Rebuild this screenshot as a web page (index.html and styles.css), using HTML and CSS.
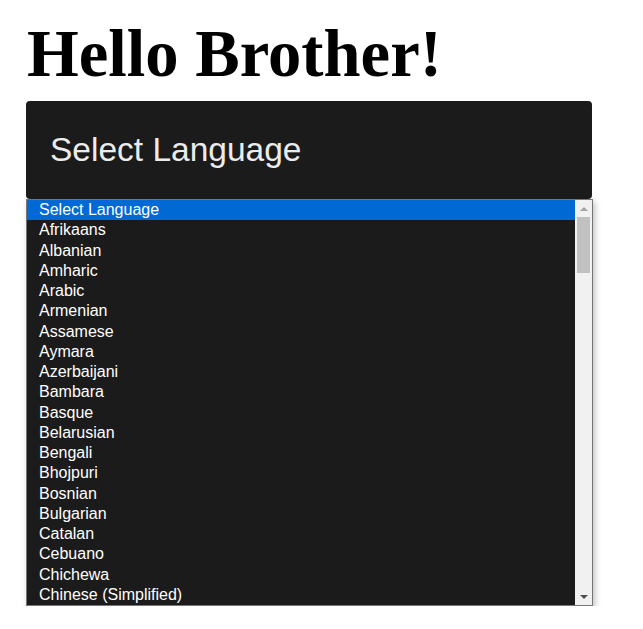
FILE: index.html
```html
<!DOCTYPE html>
<html>
<head>
<meta charset="utf-8">
<link rel="stylesheet" href="styles.css">
</head>
<body>
<div class="page">
  <h1 class="title">Hello Brother!</h1>
  <div class="picker">
    <div class="select">Select Language</div>
    <div class="popup">
      <div class="items">
        <div class="opt selected">Select Language</div>
        <div class="opt">Afrikaans</div>
        <div class="opt">Albanian</div>
        <div class="opt">Amharic</div>
        <div class="opt">Arabic</div>
        <div class="opt">Armenian</div>
        <div class="opt">Assamese</div>
        <div class="opt">Aymara</div>
        <div class="opt">Azerbaijani</div>
        <div class="opt">Bambara</div>
        <div class="opt">Basque</div>
        <div class="opt">Belarusian</div>
        <div class="opt">Bengali</div>
        <div class="opt">Bhojpuri</div>
        <div class="opt">Bosnian</div>
        <div class="opt">Bulgarian</div>
        <div class="opt">Catalan</div>
        <div class="opt">Cebuano</div>
        <div class="opt">Chichewa</div>
        <div class="opt">Chinese (Simplified)</div>
      </div>
      <div class="sbar">
        <div class="arrow up"></div>
        <div class="track"><div class="thumb"></div></div>
        <div class="arrow down"></div>
      </div>
    </div>
  </div>
</div>
</body>
</html>
```

FILE: styles.css
```css
html, body {
  margin: 0;
  padding: 0;
  background: #ffffff;
}
.page {
  padding: 0 51px 0 26px;
}
.title {
  margin: 0;
  padding: 21px 0 0 1px;
  height: 101px;
  box-sizing: border-box;
  font-family: "Liberation Serif", "Times New Roman", serif;
  font-weight: bold;
  font-size: 66.6px;
  line-height: 1;
  color: #000;
}
.select {
  height: 98px;
  background: #1b1b1b;
  border-radius: 4px;
  display: flex;
  align-items: center;
  padding-left: 24px;
  box-sizing: border-box;
  font-family: "Liberation Sans", Arial, sans-serif;
  font-size: 33.5px;
  color: #ececec;
}
.popup {
  margin-top: 0;
  width: 567px;
  height: 407px;
  box-sizing: border-box;
  border: 1px solid #767676;
  background: #1b1b1b;
  display: flex;
  box-shadow: 2px 3px 6px rgba(0,0,0,0.25);
}
.items {
  flex: 1;
  overflow: hidden;
}
.opt {
  height: 20.25px;
  line-height: 19px;
  padding-left: 12px;
  font-family: "Liberation Sans", Arial, sans-serif;
  font-size: 16px;
  color: #ffffff;
  white-space: nowrap;
}
.opt.selected {
  background: #0069d4;
}
.sbar {
  width: 17px;
  background: #f1f1f1;
  display: flex;
  flex-direction: column;
}
.arrow {
  height: 17px;
  display: flex;
  align-items: center;
  justify-content: center;
}
.arrow::before {
  content: "";
  width: 0;
  height: 0;
  border-left: 4px solid transparent;
  border-right: 4px solid transparent;
}
.arrow.up::before {
  border-bottom: 4px solid #a3a3a3;
}
.arrow.down::before {
  border-top: 4px solid #505050;
}
.track {
  flex: 1;
  padding: 0 2px;
}
.thumb {
  height: 56px;
  background: #c1c1c1;
}
```
